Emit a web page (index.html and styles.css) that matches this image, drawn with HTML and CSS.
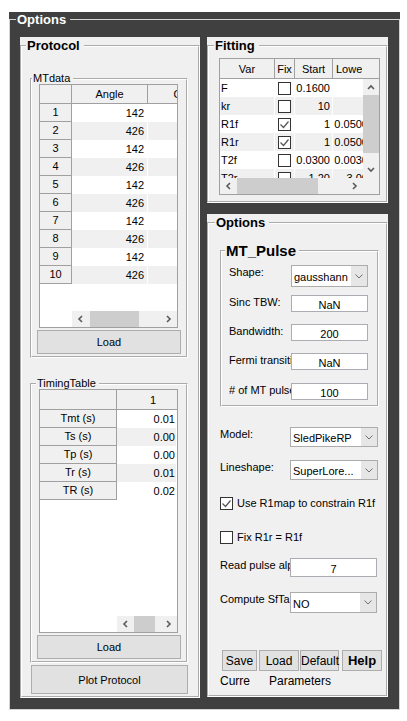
FILE: index.html
```html
<!DOCTYPE html>
<html>
<head>
<meta charset="utf-8">
<title>Options</title>
<link rel="stylesheet" href="styles.css">
</head>
<body>
<div class="fig">
<fieldset class="frame">
  <legend class="frame-title">Options</legend>
  <div class="cols">
    <div class="panel protocol">
      <fieldset class="box">
        <legend class="title t-protocol">Protocol</legend>

        <fieldset class="sub mtdata">
          <legend class="sub-title">MTdata</legend>
          <div class="grid-table mt-table">
            <div class="tr thead"><div class="th"></div><div class="th">Angle</div><div class="th nob">Offset</div></div>
            <div class="tr"><div class="rh">1</div><div class="td">142</div><div class="td"></div></div>
            <div class="tr alt"><div class="rh">2</div><div class="td">426</div><div class="td"></div></div>
            <div class="tr"><div class="rh">3</div><div class="td">142</div><div class="td"></div></div>
            <div class="tr alt"><div class="rh">4</div><div class="td">426</div><div class="td"></div></div>
            <div class="tr"><div class="rh">5</div><div class="td">142</div><div class="td"></div></div>
            <div class="tr alt"><div class="rh">6</div><div class="td">426</div><div class="td"></div></div>
            <div class="tr"><div class="rh">7</div><div class="td">142</div><div class="td"></div></div>
            <div class="tr alt"><div class="rh">8</div><div class="td">426</div><div class="td"></div></div>
            <div class="tr"><div class="rh">9</div><div class="td">142</div><div class="td"></div></div>
            <div class="tr alt"><div class="rh">10</div><div class="td">426</div><div class="td"></div></div>
            <div class="fill"></div>
            <div class="hs">
              <div class="hs-gap mt-gap"></div>
              <div class="sbar">
                <span class="arr"><svg width="7" height="8" viewBox="0 0 7 8"><path d="M5 1 L2 4 L5 7" fill="none" stroke="#5a5a5a" stroke-width="1.6"/></svg></span>
                <span class="thumb mt-thumb"></span>
                <span class="sfill"></span>
                <span class="arr"><svg width="7" height="8" viewBox="0 0 7 8"><path d="M2 1 L5 4 L2 7" fill="none" stroke="#5a5a5a" stroke-width="1.6"/></svg></span>
              </div>
            </div>
          </div>
          <button class="btn load">Load</button>
        </fieldset>

        <fieldset class="sub timing">
          <legend class="sub-title t-timing">TimingTable</legend>
          <div class="grid-table tt-table">
            <div class="tr thead"><div class="th"></div><div class="th nob one">1</div></div>
            <div class="tr"><div class="rh">Tmt (s)</div><div class="td">0.01</div></div>
            <div class="tr alt"><div class="rh">Ts (s)</div><div class="td">0.00</div></div>
            <div class="tr"><div class="rh">Tp (s)</div><div class="td">0.00</div></div>
            <div class="tr alt"><div class="rh">Tr (s)</div><div class="td">0.01</div></div>
            <div class="tr"><div class="rh">TR (s)</div><div class="td">0.02</div></div>
            <div class="fill"></div>
            <div class="hs">
              <div class="hs-gap tt-gap"></div>
              <div class="sbar">
                <span class="arr"><svg width="7" height="8" viewBox="0 0 7 8"><path d="M5 1 L2 4 L5 7" fill="none" stroke="#5a5a5a" stroke-width="1.6"/></svg></span>
                <span class="thumb tt-thumb"></span>
                <span class="sfill"></span>
                <span class="arr"><svg width="7" height="8" viewBox="0 0 7 8"><path d="M2 1 L5 4 L2 7" fill="none" stroke="#5a5a5a" stroke-width="1.6"/></svg></span>
              </div>
            </div>
          </div>
          <button class="btn load">Load</button>
        </fieldset>

        <button class="btn plot">Plot Protocol</button>
      </fieldset>
    </div>

    <div class="right">
      <div class="panel fitting">
        <fieldset class="box">
          <legend class="title t-fitting">Fitting</legend>
          <div class="grid-table fit-table">
            <div class="tr thead"><div class="th">Var</div><div class="th">Fix</div><div class="th">Start</div><div class="th nob lowe"><span>Lower</span></div></div>
            <div class="fbody">
              <div class="frows">
                <div class="tr"><div class="td v">F</div><div class="td c"><span class="cb"></span></div><div class="td">0.1600</div><div class="td"></div></div>
                <div class="tr alt"><div class="td v">kr</div><div class="td c"><span class="cb"></span></div><div class="td">10</div><div class="td"></div></div>
                <div class="tr"><div class="td v">R1f</div><div class="td c"><span class="cb"><svg width="11" height="11" viewBox="0 0 11 11"><path d="M1.5 5.5 L4.5 8.5 L9.5 2.5" fill="none" stroke="#555" stroke-width="1.2"/></svg></span></div><div class="td">1</div><div class="td">0.0500</div></div>
                <div class="tr alt"><div class="td v">R1r</div><div class="td c"><span class="cb"><svg width="11" height="11" viewBox="0 0 11 11"><path d="M1.5 5.5 L4.5 8.5 L9.5 2.5" fill="none" stroke="#555" stroke-width="1.2"/></svg></span></div><div class="td">1</div><div class="td">0.0500</div></div>
                <div class="tr"><div class="td v">T2f</div><div class="td c"><span class="cb"></span></div><div class="td">0.0300</div><div class="td">0.0030</div></div>
                <div class="tr alt"><div class="td v">T2r</div><div class="td c"><span class="cb"></span></div><div class="td">1.20</div><div class="td">3.00</div></div>
              </div>
              <div class="vs">
                <span class="varr"><svg width="8" height="6" viewBox="0 0 8 6"><path d="M1 5 L4 2 L7 5" fill="none" stroke="#5a5a5a" stroke-width="1.6"/></svg></span>
                <span class="vthumb"></span>
                <span class="sfill"></span>
                <span class="varr"><svg width="8" height="6" viewBox="0 0 8 6"><path d="M1 1 L4 4 L7 1" fill="none" stroke="#5a5a5a" stroke-width="1.6"/></svg></span>
              </div>
            </div>
            <div class="hs">
              <div class="sbar">
                <span class="arr"><svg width="7" height="8" viewBox="0 0 7 8"><path d="M5 1 L2 4 L5 7" fill="none" stroke="#5a5a5a" stroke-width="1.6"/></svg></span>
                <span class="thumb fit-thumb"></span>
                <span class="sfill"></span>
                <span class="arr"><svg width="7" height="8" viewBox="0 0 7 8"><path d="M2 1 L5 4 L2 7" fill="none" stroke="#5a5a5a" stroke-width="1.6"/></svg></span>
                <span class="corner"></span>
              </div>
            </div>
          </div>
        </fieldset>
      </div>

      <div class="panel options">
        <fieldset class="box">
          <legend class="title t-options">Options</legend>

          <fieldset class="sub mtpulse">
            <legend class="big-title">MT_Pulse</legend>
            <div class="form">
              <div class="frow"><span class="lbl w62">Shape:</span><div class="popup pw77 ph22"><span class="ptext">gausshann</span><span class="pbtn"><svg width="8" height="5" viewBox="0 0 8 5"><path d="M0.5 0.5 L4 4 L7.5 0.5" fill="none" stroke="#707070" stroke-width="1"/></svg></span></div></div>
              <div class="frow g8"><span class="lbl w62">Sinc TBW:</span><div class="edit ew77 eh17">NaN</div></div>
              <div class="frow g12"><span class="lbl w62">Bandwidth:</span><div class="edit ew77 eh17">200</div></div>
              <div class="frow g12"><span class="lbl w62">Fermi transition</span><div class="edit ew77 eh17">NaN</div></div>
              <div class="frow g13"><span class="lbl w62"># of MT pulses</span><div class="edit ew77 eh17">100</div></div>
            </div>
          </fieldset>

          <div class="orow m20"><span class="lbl w70">Model:</span><div class="popup pw88 ph20"><span class="ptext">SledPikeRP</span><span class="pbtn"><svg width="8" height="5" viewBox="0 0 8 5"><path d="M0.5 0.5 L4 4 L7.5 0.5" fill="none" stroke="#707070" stroke-width="1"/></svg></span></div></div>
          <div class="orow m13"><span class="lbl w70">Lineshape:</span><div class="popup pw88 ph20"><span class="ptext">SuperLore...</span><span class="pbtn"><svg width="8" height="5" viewBox="0 0 8 5"><path d="M0.5 0.5 L4 4 L7.5 0.5" fill="none" stroke="#707070" stroke-width="1"/></svg></span></div></div>
          <div class="orow chk m17"><span class="cb"><svg width="11" height="11" viewBox="0 0 11 11"><path d="M1.5 5.5 L4.5 8.5 L9.5 2.5" fill="none" stroke="#555" stroke-width="1.2"/></svg></span><span class="ctext">Use R1map to constrain R1f</span></div>
          <div class="orow chk m21"><span class="cb"></span><span class="ctext">Fix R1r = R1f</span></div>
          <div class="orow m14"><span class="lbl w70">Read pulse alpha</span><div class="edit ew87 eh19">7</div></div>
          <div class="orow m15"><span class="lbl w70">Compute SfTable</span><div class="popup pw87 ph21"><span class="ptext">NO</span><span class="pbtn"><svg width="8" height="5" viewBox="0 0 8 5"><path d="M0.5 0.5 L4 4 L7.5 0.5" fill="none" stroke="#707070" stroke-width="1"/></svg></span></div></div>

          <div class="btnrow">
            <button class="btn b-save">Save</button>
            <button class="btn b-load">Load</button>
            <button class="btn b-def">Default</button>
            <button class="btn b-help">Help</button>
          </div>
          <div class="status"><span class="st1">Curre</span><span class="st2">Parameters</span></div>
        </fieldset>
      </div>
    </div>
  </div>
</fieldset>
</div>
</body>
</html>
```

FILE: styles.css
```css
* { box-sizing: border-box; }
html, body { margin: 0; background: #fff; }
body { font-family: "Liberation Sans", Arial, sans-serif; font-size: 11px; color: #000; }

fieldset { margin: 0; padding: 0; min-width: 0; }
legend { padding: 0; }

.fig { margin: 12px 0 0 9px; width: 391px; height: 698px; background: #404040; }
.frame { width: 391px; height: 698px; border: 1px solid #d4d4d4; }
.frame-title { color: #fff; font-weight: bold; font-size: 13px; line-height: 15px; margin-left: 6px; padding: 0 4px 0 1px; }

.cols { display: grid; grid-template-columns: 180px 181px; column-gap: 7px; margin: 10px 0 0 10px; align-items: start; }
.right { display: flex; flex-direction: column; gap: 11px; }

.panel { background: #f0f0f0; }
.protocol { height: 661px; }
.fitting { height: 166px; }
.options { height: 483px; }

.box { height: 100%; border: 2px groove #fff; }
.title { font-weight: bold; font-size: 13px; line-height: 17px; padding: 0 4px 0 1px; }
.t-protocol { margin-left: 4px; }
.t-fitting { margin-left: 5px; }
.t-options { margin-left: 6px; }

.sub { width: 158px; margin-left: 8px; border: 2px groove #fff; }
.mtdata { margin-top: 19px; }
.timing { margin-top: 20px; }
.sub-title { font-size: 11px; line-height: 11px; padding: 0 3px 0 1px; }
.t-timing { margin-left: 4px; }

/* tables */
.grid-table { border: 1px solid #a0a0a0; background: #fff; display: flex; flex-direction: column; overflow: hidden; margin-left: 7px; }
.mt-table { width: 139px; height: 244px; }
.tt-table { width: 139px; height: 244px; }
.tr { display: grid; flex: none; height: 18px; }
.thead { height: 19px; }
.tt-table .thead { height: 20px; }
.mt-table .tr { grid-template-columns: 32px 76px 80px; }
.tt-table .tr { grid-template-columns: 77px 60px; }

.th { background: #f0f0f0; border-right: 1px solid #a0a0a0; border-bottom: 1px solid #a0a0a0; text-align: center; white-space: nowrap; overflow: hidden; display: flex; align-items: center; justify-content: center; }
.th.nob { border-right: none; }
.th.one { padding-left: 12px; }
.rh { background: #f0f0f0; border-right: 1px solid #a0a0a0; border-bottom: 1px solid #a0a0a0; text-align: center; line-height: 17px; white-space: nowrap; overflow: hidden; }
.td { border-right: 1px solid #fff; text-align: right; padding-right: 3px; line-height: 18px; white-space: nowrap; overflow: hidden; }
.tt-table .td { padding-right: 1px; }
.alt .td { background: #f0f0f0; }
.fill { flex: 1; }

.hs { display: flex; height: 16px; flex: none; }
.hs-gap { background: #fff; flex: none; }
.mt-gap { width: 32px; }
.tt-gap { width: 77px; }
.sbar { flex: 1; display: flex; background: #f0f0f0; }
.arr { width: 17px; height: 16px; flex: none; display: flex; align-items: center; justify-content: center; }
.thumb { height: 16px; background: #cdcdcd; flex: none; }
.mt-thumb { width: 49px; margin-left: 1px; }
.tt-thumb { width: 21px; }
.fit-thumb { width: 81px; }
.sfill { flex: 1; }
.corner { width: 16px; flex: none; background: #f0f0f0; }

.btn { font: inherit; font-size: 11px; color: #000; background: #e1e1e1; border: 1px solid #adadad; padding: 0; margin: 0; display: block; }
.load { width: 144px; height: 24px; margin: 2px 0 2px 5px; }
.plot { width: 157px; height: 29px; margin: 2px 0 0 9px; }

/* fitting table */
.fit-table { width: 161px; height: 137px; margin: 4px 0 0 10px; }
.fit-table .thead { height: 20px; grid-template-columns: 55px 20px 38px 1fr; }
.th.lowe { justify-content: flex-start; padding-left: 3px; }
.th.lowe span { display: block; width: 26px; overflow: hidden; }
.fbody { display: flex; height: 99px; flex: none; }
.frows { flex: 1; overflow: hidden; }
.frows .tr { grid-template-columns: 55px 20px 38px 38px; }
.td.v { text-align: left; padding-left: 1px; padding-right: 0; }
.td.c { display: flex; align-items: center; justify-content: center; padding: 0; }
.frows .td { padding-right: 2px; }
.frows .td.v { padding-right: 0; }
.frows .td.c { padding: 0; }
.vs { width: 16px; flex: none; background: #f0f0f0; display: flex; flex-direction: column; }
.varr { height: 16px; flex: none; display: flex; align-items: center; justify-content: center; }
.vthumb { height: 58px; flex: none; background: #cdcdcd; }

.cb { width: 13px; height: 13px; border: 1px solid #333; background: #fff; display: flex; align-items: center; justify-content: center; flex: none; }

/* options */
.mtpulse { width: 159px; margin: 12px 0 0 11px; }
.big-title { font-weight: bold; font-size: 15px; line-height: 15px; margin-left: 3px; padding: 0 3px 0 1px; }
.form { padding: 7px 0 5px 7px; }
.frow, .orow { display: flex; align-items: flex-start; }
.orow { margin-left: 11px; }
.g8 { margin-top: 8px; }
.g12 { margin-top: 12px; }
.g13 { margin-top: 13px; }
.m13 { margin-top: 13px; }
.m14 { margin-top: 14px; }
.m15 { margin-top: 15px; }
.m17 { margin-top: 17px; }
.m20 { margin-top: 20px; }
.m21 { margin-top: 21px; }

.lbl { line-height: 13px; padding-top: 1px; white-space: nowrap; overflow: hidden; flex: none; }
.w62 { width: 62px; }
.w70 { width: 70px; }

.popup { display: flex; background: #fff; border: 1px solid #acacac; flex: none; }
.pw77 { width: 77px; }
.pw88 { width: 88px; }
.pw87 { width: 87px; }
.ph22 { height: 22px; }
.ph20 { height: 20px; }
.ph21 { height: 21px; }
.ptext { flex: 1; display: flex; align-items: center; padding: 2px 0 0 2px; white-space: nowrap; overflow: hidden; }
.pbtn { width: 16px; flex: none; background: #e6e6e6; display: flex; align-items: center; justify-content: center; }

.edit { background: #fff; border: 1px solid #abadb3; display: flex; align-items: center; justify-content: center; padding-top: 2px; flex: none; }
.ew77 { width: 77px; }
.ew87 { width: 87px; }
.eh17 { height: 17px; }
.eh19 { height: 19px; }

.chk { align-items: center; height: 13px; }
.ctext { margin-left: 4px; line-height: 13px; white-space: nowrap; }

.btnrow { display: flex; margin: 37px 0 0 13px; }
.btnrow .btn { height: 21px; font-size: 12px; }
.b-save { width: 35px; }
.b-load { width: 40px; margin-left: 2px !important; }
.b-def { width: 39px; margin-left: 1px !important; }
.b-help { width: 40px; margin-left: 3px !important; font-weight: bold; font-size: 13px !important; }

.status { display: flex; margin: 3px 0 0 11px; font-size: 12px; line-height: 14px; }
.st2 { margin-left: 19px; }
```
